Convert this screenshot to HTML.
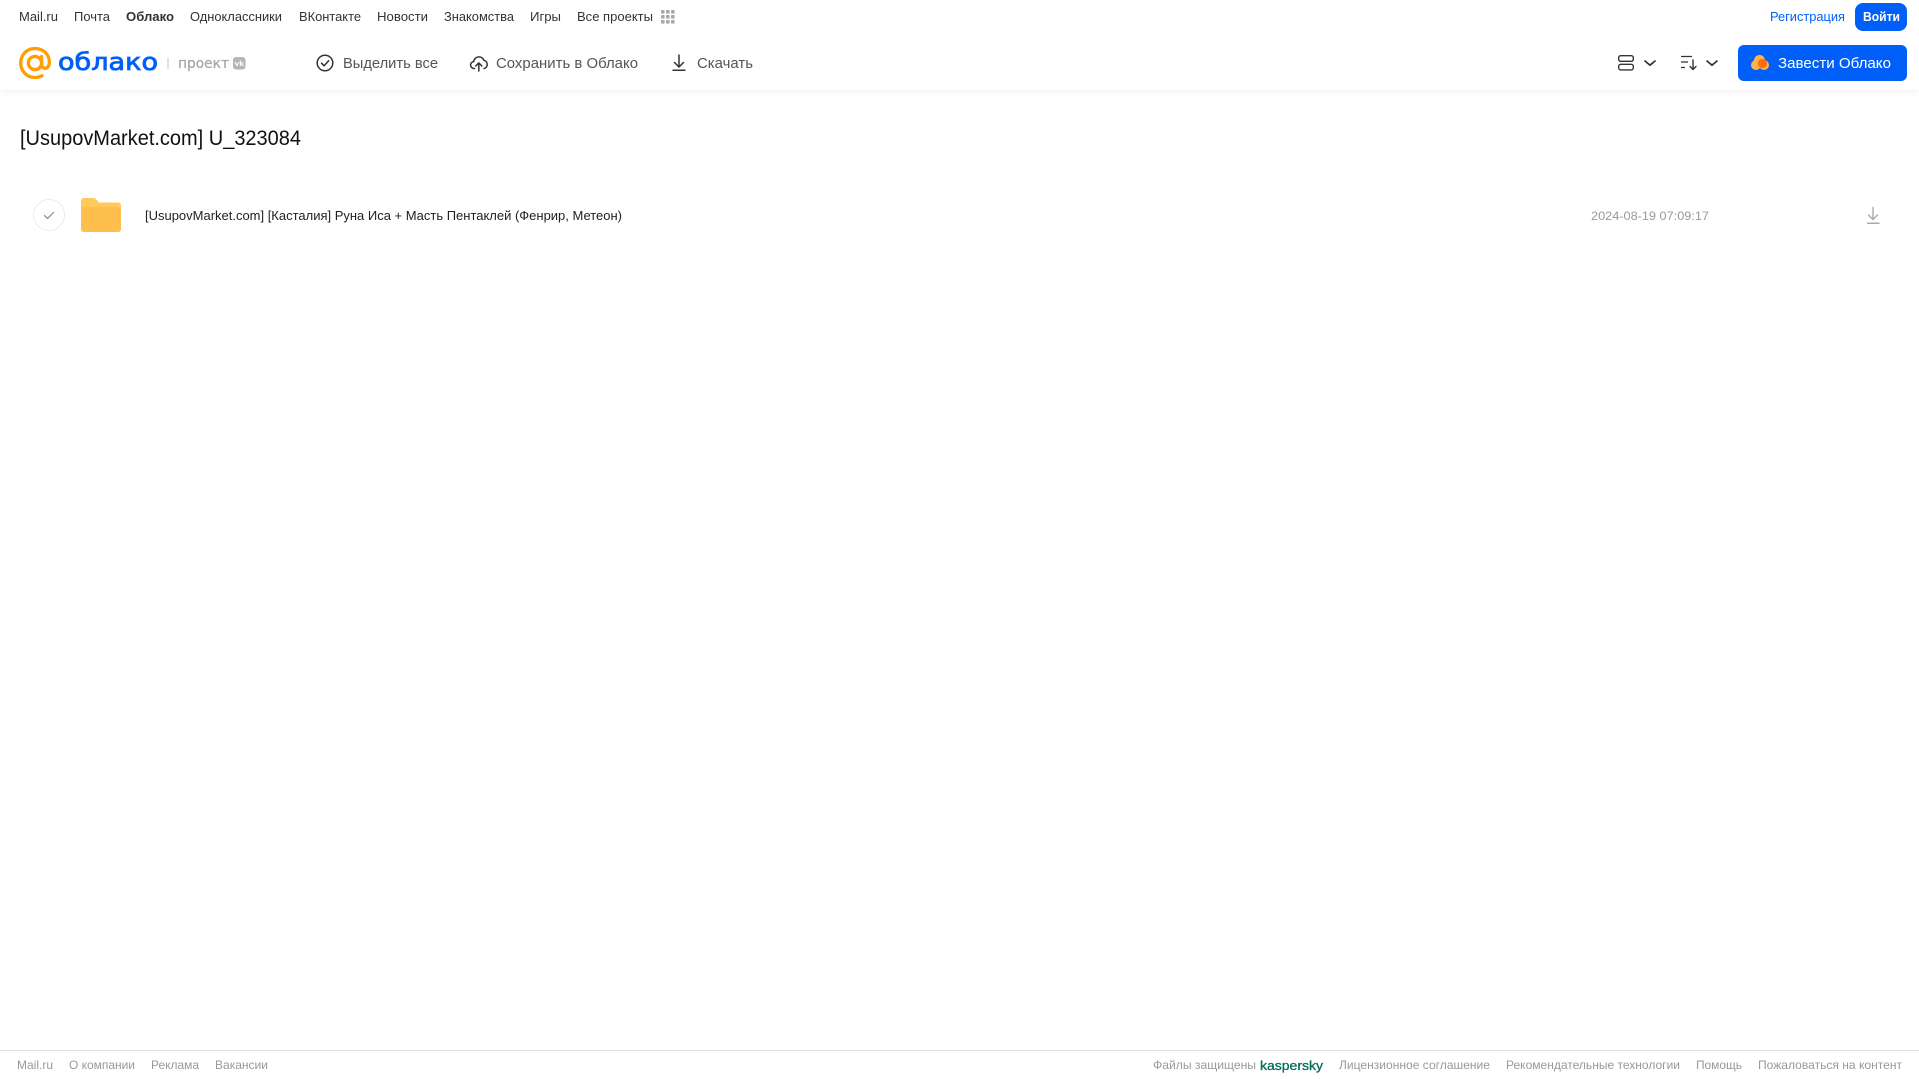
<!DOCTYPE html>
<html lang="ru"><head><meta charset="utf-8"><title>Облако</title>
<style>
html,body{margin:0;padding:0;background:#fff;width:1919px;height:1079px;overflow:hidden}
svg{display:block;position:absolute;left:0;top:0}
text{font-family:"Liberation Sans",sans-serif}
.hd{position:absolute;left:0;top:0;width:1919px;height:90px;background:#fff;box-shadow:0 2px 8px rgba(0,0,0,.06)}
.m{font-size:13px;fill:#333}
.t{font-size:14.5px;fill:#555}
.f{font-size:12px;fill:#999}
.w{font-family:"DejaVu Sans",sans-serif}
</style></head><body>
<div class="hd"></div>
<svg width="1919" height="1079" viewBox="0 0 1919 1079" xmlns="http://www.w3.org/2000/svg">
<!-- top menu -->
<g class="m">
<text class="m" x="19" y="21" textLength="39" lengthAdjust="spacingAndGlyphs">Mail.ru</text>
<text class="m" x="74" y="21" textLength="36" lengthAdjust="spacingAndGlyphs">Почта</text>
<text class="m" x="126" y="21" textLength="48" lengthAdjust="spacingAndGlyphs" font-weight="700">Облако</text>
<text class="m" x="190" y="21" textLength="92" lengthAdjust="spacingAndGlyphs">Одноклассники</text>
<text class="m" x="299" y="21" textLength="62" lengthAdjust="spacingAndGlyphs">ВКонтакте</text>
<text class="m" x="377" y="21" textLength="51" lengthAdjust="spacingAndGlyphs">Новости</text>
<text class="m" x="444" y="21" textLength="70" lengthAdjust="spacingAndGlyphs">Знакомства</text>
<text class="m" x="530" y="21" textLength="31" lengthAdjust="spacingAndGlyphs">Игры</text>
<text class="m" x="577" y="21" textLength="76" lengthAdjust="spacingAndGlyphs">Все проекты</text>
</g>
<g fill="#a8a8a8">
<rect x="661" y="10" width="3.6" height="3.6" rx=".8"/><rect x="666" y="10" width="3.6" height="3.6" rx=".8"/><rect x="671" y="10" width="3.6" height="3.6" rx=".8"/>
<rect x="661" y="15" width="3.6" height="3.6" rx=".8"/><rect x="666" y="15" width="3.6" height="3.6" rx=".8"/><rect x="671" y="15" width="3.6" height="3.6" rx=".8"/>
<rect x="661" y="20" width="3.6" height="3.6" rx=".8"/><rect x="666" y="20" width="3.6" height="3.6" rx=".8"/><rect x="671" y="20" width="3.6" height="3.6" rx=".8"/>
</g>
<text x="1770" y="21" font-size="13" fill="#005ff9" textLength="75" lengthAdjust="spacingAndGlyphs">Регистрация</text>
<rect x="1855" y="3" width="52" height="28" rx="8" fill="#005ff9"/>
<text x="1863" y="21" font-size="13" font-weight="700" fill="#fff" textLength="37" lengthAdjust="spacingAndGlyphs">Войти</text>

<!-- logo -->
<g fill="none" stroke="#ff9e00" stroke-width="3.3" stroke-linecap="round">
<circle cx="35" cy="63" r="6.6"/>
<path d="M41.6 56.500v7.500c0 2.800 1.500 4.300 3.500 4.300 2.600 0 4.300-2.600 4.300-6 0-8-6.300-13.800-14.400-13.800s-14.300 6.400-14.300 14.500S26.900 77.500 35 77.500c2.800 0 5-.6 7-1.800"/>
</g>
<text class="w" x="58" y="70" font-size="24" fill="#005ff9" stroke="#005ff9" stroke-width=".8" textLength="100" lengthAdjust="spacingAndGlyphs">облако</text>
<rect x="167.500" y="58" width="1" height="11" fill="#c4c4c4"/>
<text class="w" x="178" y="68" font-size="14" fill="#a9a9a9" stroke="#a9a9a9" stroke-width=".3" textLength="51" lengthAdjust="spacingAndGlyphs">проект</text>
<rect x="233" y="57" width="12.500" height="12.500" rx="3" fill="#b5b5b5"/>
<text x="234.500" y="66" font-size="7" font-weight="700" fill="#fff" textLength="9.500" lengthAdjust="spacingAndGlyphs">vk</text>

<!-- toolbar -->
<circle cx="325" cy="63" r="7.800" fill="none" stroke="#333" stroke-width="1.500"/>
<path d="M321.500 63.200l2.600 2.600 4.600-5" fill="none" stroke="#333" stroke-width="1.500" stroke-linecap="round" stroke-linejoin="round"/>
<text class="t" x="343" y="68" textLength="95" lengthAdjust="spacingAndGlyphs">Выделить все</text>
<path d="M474.500 68.500a3.500 3.500 0 0 1-.8-7 5.300 5.300 0 0 1 10.200-1.200 4.200 4.200 0 0 1 .1 8.200" fill="none" stroke="#333" stroke-width="1.500" stroke-linecap="round"/>
<path d="M478.800 71v-8M475.700 66l3.100-3.100 3.100 3.100" fill="none" stroke="#333" stroke-width="1.500" stroke-linecap="round" stroke-linejoin="round"/>
<text class="t" x="496" y="68" textLength="142" lengthAdjust="spacingAndGlyphs">Сохранить в Облако</text>
<path d="M679 55v12M674.500 62.500l4.500 4.500 4.500-4.500" fill="none" stroke="#333" stroke-width="1.500" stroke-linecap="round" stroke-linejoin="round"/>
<rect x="672.500" y="69.500" width="13" height="1.500" fill="#333"/>
<text class="t" x="697" y="68" textLength="56" lengthAdjust="spacingAndGlyphs">Скачать</text>

<rect x="1618.700" y="55.700" width="14.600" height="5.600" rx="2" fill="none" stroke="#333" stroke-width="1.400"/>
<rect x="1618.700" y="64.300" width="14.600" height="5.600" rx="2" fill="none" stroke="#333" stroke-width="1.400"/>
<path d="M1645 61l5 4.200 5-4.200" fill="none" stroke="#333" stroke-width="1.700" stroke-linecap="round" stroke-linejoin="round"/>
<path d="M1681 56.500h11M1681 62h7M1681 67.500h4" fill="none" stroke="#333" stroke-width="1.300"/>
<path d="M1693 60v9M1690 66.500l3 3 3-3" fill="none" stroke="#333" stroke-width="1.400" stroke-linecap="round" stroke-linejoin="round"/>
<path d="M1707 61l5 4.200 5-4.200" fill="none" stroke="#333" stroke-width="1.700" stroke-linecap="round" stroke-linejoin="round"/>

<rect x="1738" y="45" width="169" height="36" rx="6" fill="#005ff9"/>
<g fill="#ffb347"><circle cx="1756" cy="65" r="5"/><circle cx="1759.500" cy="60.500" r="5.500"/><circle cx="1764" cy="65" r="5"/></g>
<circle cx="1762.500" cy="63.500" r="4.600" fill="#ff6a13"/>
<text x="1778" y="68" font-size="14.500" fill="#fff" textLength="113" lengthAdjust="spacingAndGlyphs">Завести Облако</text>

<!-- title -->
<text x="20" y="145" font-size="21" fill="#111" textLength="281" lengthAdjust="spacingAndGlyphs">[UsupovMarket.com] U_323084</text>

<!-- row -->
<circle cx="49" cy="215" r="15.500" fill="#fff" stroke="#ececec" stroke-width="1"/>
<path d="M44.500 215.500l3 3 6-6" fill="none" stroke="#999" stroke-width="1.400" stroke-linecap="round" stroke-linejoin="round"/>
<path d="M81 201a3 3 0 0 1 3-3h9c1.500 0 2.600.6 3.500 1.700l2.300 2.800H118a3 3 0 0 1 3 3V229a3 3 0 0 1-3 3H84a3 3 0 0 1-3-3z" fill="#ffc95c"/>
<path d="M81 209a2 2 0 0 1 2-2h36a2 2 0 0 1 2 2v20a3 3 0 0 1-3 3H84a3 3 0 0 1-3-3z" fill="#ffbf4d"/>
<text x="145" y="220" font-size="13" fill="#1f1f1f" textLength="477" lengthAdjust="spacingAndGlyphs">[UsupovMarket.com] [Касталия] Руна Иса + Масть Пентаклей (Фенрир, Метеон)</text>
<text x="1591" y="220" font-size="12" fill="#999" textLength="118" lengthAdjust="spacingAndGlyphs">2024-08-19 07:09:17</text>
<path d="M1873 207.500v12M1868.500 215l4.500 4.500 4.500-4.500" fill="none" stroke="#aaa" stroke-width="1.400" stroke-linecap="round" stroke-linejoin="round"/>
<rect x="1867" y="222.500" width="12.500" height="1.500" fill="#aaa"/>

<!-- footer -->
<rect x="0" y="1050" width="1919" height="1" fill="#ddd"/>
<text class="f" x="17" y="1069" textLength="36" lengthAdjust="spacingAndGlyphs">Mail.ru</text>
<text class="f" x="69" y="1069" textLength="66" lengthAdjust="spacingAndGlyphs">О компании</text>
<text class="f" x="151" y="1069" textLength="48" lengthAdjust="spacingAndGlyphs">Реклама</text>
<text class="f" x="215" y="1069" textLength="53" lengthAdjust="spacingAndGlyphs">Вакансии</text>
<text class="f" x="1153" y="1069" textLength="103" lengthAdjust="spacingAndGlyphs">Файлы защищены</text>
<text x="1260" y="1070" font-size="13" fill="#006d5c" stroke="#006d5c" stroke-width=".3" textLength="63" lengthAdjust="spacingAndGlyphs">kaspersky</text>
<text class="f" x="1339" y="1069" textLength="151" lengthAdjust="spacingAndGlyphs">Лицензионное соглашение</text>
<text class="f" x="1506" y="1069" textLength="174" lengthAdjust="spacingAndGlyphs">Рекомендательные технологии</text>
<text class="f" x="1696" y="1069" textLength="46" lengthAdjust="spacingAndGlyphs">Помощь</text>
<text class="f" x="1758" y="1069" textLength="144" lengthAdjust="spacingAndGlyphs">Пожаловаться на контент</text>
</svg>
</body></html>
